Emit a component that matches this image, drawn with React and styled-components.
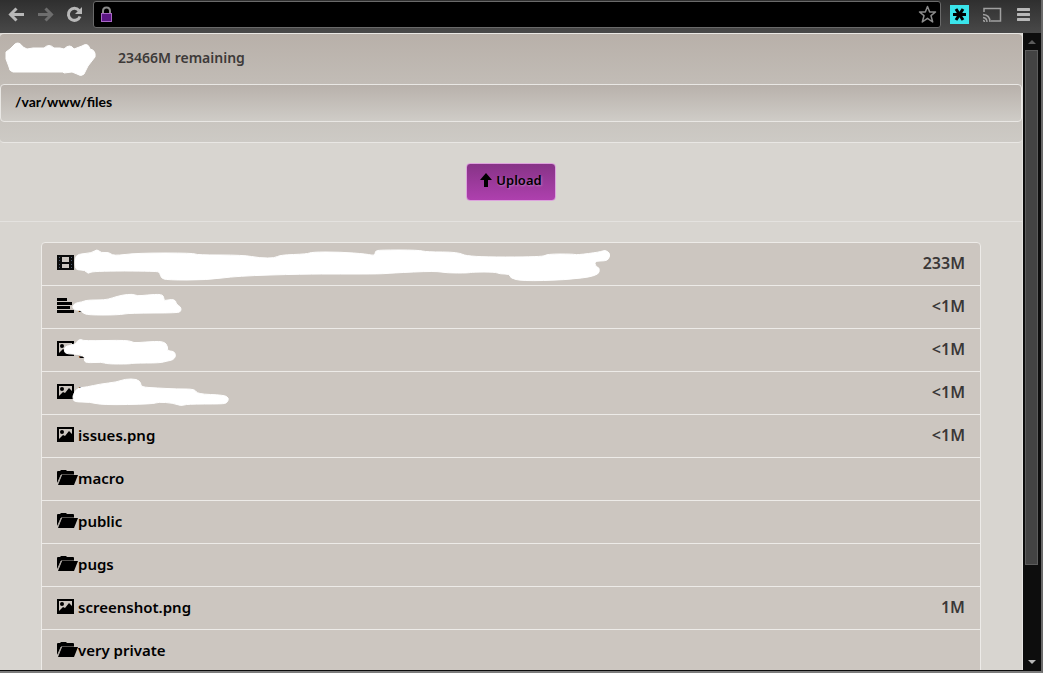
import React from "react";
import styled, { createGlobalStyle } from "styled-components";

const Global = createGlobalStyle`
  * { box-sizing: border-box; }
  body { margin: 0; background: #d8d5d0; font-family: Lato, "Open Sans", sans-serif; }
  button, input { font: inherit; }
`;

const Window = styled.div`
  display: flex;
  flex-direction: column;
  height: 100vh;
  overflow: hidden;
  border-right: 2px solid #6b6b6b;
  border-bottom: 2px solid #7b7b7b;
`;

const Toolbar = styled.header`
  display: flex;
  align-items: center;
  gap: 8px;
  flex: none;
  height: 33px;
  padding: 0 7px 4px 6px;
  background: linear-gradient(#2f2f2f, #494949);
`;

const ToolButton = styled.button`
  display: flex;
  align-items: center;
  justify-content: center;
  flex: none;
  width: 21px;
  height: 21px;
  padding: 0;
  border: 0;
  background: none;
  color: ${(p) => (p.$dim ? "#6e6e6e" : "#b8b8b8")};
`;

const ToolGroup = styled.div`
  display: flex;
  gap: ${(p) => p.$gap}px;
`;

const AddressBar = styled.label`
  display: flex;
  align-items: center;
  flex: 1;
  min-width: 0;
  height: 27px;
  padding: 0 2px 0 6px;
  border: 1px solid #6a6a6a;
  border-radius: 3px;
  background: #000;
`;

const AddressInput = styled.input`
  flex: 1;
  min-width: 0;
  height: 20px;
  border: 0;
  outline: 0;
  background: transparent;
  color: #ccc;
  font-size: 14px;
`;

const Viewport = styled.div`
  display: flex;
  flex: 1;
  min-height: 0;
  border-bottom: 1px solid #0c0c0c;
`;

const Page = styled.main`
  flex: 1;
  min-width: 0;
  overflow: hidden;
  background: #d8d5d0;
  border-right: 1px solid #e6e4e1;
`;

const Banner = styled.div`
  padding-bottom: 20px;
  border: solid #e9e7e4;
  border-width: 1px 0;
  border-radius: 4px;
  background: linear-gradient(#b8b0a9, #cdcac5);
`;

const BannerTop = styled.div`
  display: flex;
  align-items: center;
  gap: 22px;
  height: 50px;
  padding-left: 5px;
`;

const Remaining = styled.span`
  padding-bottom: 2px;
  color: #3d3a39;
  font-family: "Noto Sans", sans-serif;
  font-size: 14px;
  font-weight: 600;
  line-height: 20px;
`;

const PathBar = styled.nav`
  display: flex;
  padding: 7px 14px 9px;
  border: 1px solid #e9e7e4;
  border-radius: 4px;
  background: linear-gradient(#b8b1ab, #cfccc7);
`;

const TextLink = styled.a`
  color: #000;
  font-size: 14px;
  font-weight: 700;
  line-height: 20px;
  text-decoration: none;
`;

const UploadArea = styled.section`
  display: flex;
  justify-content: center;
  padding: 20px 0;
  border-bottom: 1px solid #e4e2df;
`;

const UploadButton = styled.button`
  display: flex;
  align-items: center;
  gap: 4px;
  height: 38px;
  padding: 0 13px 4px;
  border: 1px solid #dda2dd;
  border-radius: 4px;
  background: linear-gradient(#873387, #ae40ae);
  color: #000;
  font-family: "Noto Sans", sans-serif;
  font-size: 13px;
  font-weight: 600;
  text-shadow: 1px 1px 2px rgba(255, 255, 255, 0.3);
`;

const FileList = styled.ul`
  margin: 20px 41px;
  padding: 0;
  border: 1px solid #edebe8;
  border-radius: 4px;
  background: #ccc6c0;
  list-style: none;
`;

const FileRow = styled.li`
  position: relative;
  display: flex;
  align-items: center;
  justify-content: space-between;
  height: 43px;
  padding: 0 15px 2px;
  border-bottom: 1px solid #edebe8;
  font-family: "Noto Sans", sans-serif;
  font-size: 15px;
  font-weight: 600;
  line-height: 20px;
`;

const FileLink = styled.a`
  display: flex;
  align-items: center;
  color: #000;
  text-decoration: none;
`;

const IconSlot = styled.span`
  display: flex;
  flex: none;
  width: 21px;
  height: 17px;
`;

const FileSize = styled.span`
  color: #3a3737;
  font-size: 16px;
`;

const ScribbleLayer = styled.svg`
  position: absolute;
  left: 0;
  top: 0;
  pointer-events: none;
`;

const ScrollTrack = styled.aside`
  display: flex;
  flex-direction: column;
  flex: none;
  width: 18px;
  padding: 0 3px 0 2px;
  background: #0d0d0d;
`;

const ScrollArrow = styled.button`
  display: flex;
  align-items: center;
  justify-content: center;
  flex: none;
  height: 17px;
  padding: 0;
  border: 0;
  background: none;
  color: ${(p) => (p.$dim ? "#5c5c5c" : "#b8b8b8")};
`;

const ScrollThumb = styled.div`
  flex: 515;
  border: 1px solid #5c5c5c;
  background: #434343;
`;

const ScrollRest = styled.div`
  flex: 88;
`;

// Turns a list of outline points into a closed curve through their midpoints.
function smoothOutline(points) {
  const pts = points.split(" ").map((p) => p.split(",").map(Number));
  const mid = (a, b) => `${(a[0] + b[0]) / 2} ${(a[1] + b[1]) / 2}`;
  const last = pts[pts.length - 1];
  return (
    `M${mid(last, pts[0])}` +
    pts.map((p, i) => `Q${p[0]} ${p[1]} ${mid(p, pts[(i + 1) % pts.length])}`).join("") +
    "Z"
  );
}

function Scribble({ points, viewBox }) {
  return (
    <ScribbleLayer width="600" height="42" viewBox={viewBox}>
      <path d={smoothOutline(points)} fill="#fff" stroke="#fff" strokeWidth="1" />
    </ScribbleLayer>
  );
}

const icons = {
  film: (
    <svg width="17" height="15" shapeRendering="crispEdges">
      <path d="M0 0H17V15H0Z" fill="#0b0b0b" />
      <path d="M5 2H12V7H5ZM5 9H12V13H5Z" fill="#ccc6c0" />
      <path d="M2 2h1v1H2zM2 5h1v1H2zM2 9h1v1H2zM2 12h1v1H2zM14 2h1v1h-1zM14 5h1v1h-1zM14 9h1v1h-1zM14 12h1v1h-1z" fill="#4c5a70" />
    </svg>
  ),
  text: (
    <svg width="17" height="15" shapeRendering="crispEdges">
      <path d="M0 0H10V3H0ZM0 4H15V7H0ZM0 8H13V11H0ZM0 12H17V15H0Z" />
    </svg>
  ),
  image: (
    <svg width="17" height="15">
      <path d="M0 0H17V15H0Z" />
      <path d="M2 2H15V7L12 4L8 9L6 8L2 12Z" fill="#ccc6c0" />
      <circle cx="5" cy="5" r="2" />
    </svg>
  ),
  folder: (
    <svg width="21" height="15">
      <path d="M0 13V2Q0 1 1 1H3L4 0H9L10 1H16Q17 1 17 2V4H5L4 5Z" />
      <path d="M5 4.500H17" stroke="#55524f" />
      <path d="M5 5H21L17 15H1Z" />
      <path d="M1 13L4 5" stroke="#a49f9a" />
    </svg>
  ),
};

const files = [
  {
    icon: "film", name: "", size: "233M", box: "42 243 600 42",
    mark: "75,258 78,254 92,253 97,249 101,253 109,252 113,256 137,253 193,253 197,255 243,255 260,258 275,258 280,255 307,254 312,252 340,252 367,254 375,256 375,251 380,250 418,250 427,252 458,252 468,257 543,257 547,254 573,254 577,255 600,252 605,250 610,253 609,259 605,261 595,261 595,266 600,268 598,276 565,280 522,281 510,278 510,274 500,274 495,272 473,272 468,273 447,273 435,271 392,273 380,274 340,274 303,274 237,276 207,280 167,280 161,278 160,273 157,271 92,271 88,274 85,270 77,270 75,267",
  },
  {
    icon: "text", name: "s", size: "<1M", box: "42 286 600 42",
    mark: "72,307 75,303 82,302 87,300 105,300 112,298 122,295 133,294 137,296 147,295 162,294 164,298 164,301 172,299 176,301 176,304 181,307 181,311 178,313 130,313 118,315 88,315 83,313 80,310 75,310",
  },
  {
    icon: "image", name: "g", size: "<1M", box: "42 329 600 42",
    mark: "64,349 66,346 76,344 77,341 81,339 83,341 129,340 133,343 145,342 164,341 168,347 167,351 174,351 176,356 173,360 167,361 160,363 133,363 130,364 107,364 102,362 86,363 84,360 85,357 79,354 65,354",
  },
  {
    icon: "image", name: "i", size: "<1M", box: "42 372 600 42",
    mark: "73,398 73,395 77,388 87,387 100,384 117,382 125,379 137,379 141,383 141,387 157,388 177,389 195,389 197,394 224,395 229,398 227,403 222,404 187,404 181,406 173,403 158,402 153,404 102,405 90,402 74,402",
  },
  { icon: "image", name: "issues.png", size: "<1M" },
  { icon: "folder", name: "macro" },
  { icon: "folder", name: "public" },
  { icon: "folder", name: "pugs" },
  { icon: "image", name: "screenshot.png", size: "1M" },
  { icon: "folder", name: "very private" },
];

export default function App() {
  return (
    <>
      <Global />
      <Window>
        <Toolbar>
          <ToolGroup $gap={8}>
            <ToolButton aria-label="Back">
              <svg width="17" height="15" fill="none" stroke="currentColor" strokeWidth="3"><path d="M16 7.5H3M8.500 1.500L2.500 7.500L8.500 13.500" /></svg>
            </ToolButton>
            <ToolButton aria-label="Forward" $dim>
              <svg width="17" height="15" fill="none" stroke="currentColor" strokeWidth="3"><path d="M1 7.5H14M8.500 1.500L14.500 7.500L8.500 13.500" /></svg>
            </ToolButton>
            <ToolButton aria-label="Reload">
              <svg width="17" height="17" fill="none" stroke="currentColor" strokeWidth="3"><path d="M13 4.500A6 6 0 1 0 14 10.500" /><path d="M16 1V8H9Z" fill="currentColor" stroke="none" /></svg>
            </ToolButton>
          </ToolGroup>
          <AddressBar>
            <svg width="13" height="17">
              <path d="M3 8V5Q3 1.500 6.500 1.500T10 5V8" fill="none" stroke="#8a8a8a" strokeWidth="2" />
              <rect x="1.500" y="7.500" width="10" height="8" fill="#5b1683" stroke="#a866c4" />
            </svg>
            <AddressInput aria-label="Address" />
            <ToolButton as="span">
              <svg width="19" height="19" fill="none" stroke="#8b8b8b" strokeWidth="1.500" strokeLinejoin="round"><path d="M9.500 1.500L11.700 7H17.500L13 10.700L14.700 17L9.500 13.300L4.300 17L6 10.700L1.500 7H7.300Z" /></svg>
            </ToolButton>
          </AddressBar>
          <ToolGroup $gap={11}>
            <ToolButton aria-label="Extension">
              <svg width="19" height="19"><path d="M0 0H19V19H0Z" fill="#3ae4ea" /><path d="M3 9.500H16M6 4L13 15M13 4L6 15" stroke="#000" strokeWidth="3" /></svg>
            </ToolButton>
            <ToolButton aria-label="Cast">
              <svg width="20" height="16" fill="none" stroke="#a0a0a0" strokeWidth="1.500"><path d="M2 5V1.500H18.500V14H9" /><path d="M1 7.500Q8 8 8 15M1 10.500Q5 11 5 15M1 13.500Q2.500 13.500 2.500 15" /></svg>
            </ToolButton>
            <ToolButton aria-label="Menu">
              <svg width="13" height="13"><path d="M1 1.500H12M1 6.500H12M1 11.500H12" stroke="#b8b8b8" strokeWidth="3" strokeLinecap="round" /></svg>
            </ToolButton>
          </ToolGroup>
        </Toolbar>
        <Viewport>
          <Page>
            <Banner>
              <BannerTop>
                <svg width="91" height="34" viewBox="5 43 91 34" fill="#fff" stroke="#fff" strokeWidth="1" strokeLinejoin="round">
                  <path d="M6 53L10 50L15 45Q19 42 23 48L27 50L33 49L44 49Q49 44 54 49L60 49L64 50Q70 44 74 50L82 47Q88 43 90 50Q96 51 95 58L88 67L84 75Q81 78 77 75L72 73L64 74L63 73H13Q9 72 9 68L6 60Z" />
                </svg>
                <Remaining>23466M remaining</Remaining>
              </BannerTop>
              <PathBar><TextLink href="#files">/var/www/files</TextLink></PathBar>
            </Banner>
            <UploadArea>
              <UploadButton>
                <svg width="12" height="15"><path d="M6 0L12 7H8V14H4V7H0Z" /></svg>
                Upload
              </UploadButton>
            </UploadArea>
            <FileList>
              {files.map((f, i) => (
                <FileRow key={i}>
                  <FileLink href="#file" aria-label={f.name.length > 1 ? f.name : "Hidden file"}>
                    <IconSlot>{icons[f.icon]}</IconSlot>
                    {f.name}
                  </FileLink>
                  <FileSize>{f.size}</FileSize>
                  {f.mark && <Scribble points={f.mark} viewBox={f.box} />}
                </FileRow>
              ))}
            </FileList>
          </Page>
          <ScrollTrack>
            <ScrollArrow aria-label="Scroll up" $dim><svg width="8" height="4" fill="currentColor"><path d="M0 4L4 0L8 4Z" /></svg></ScrollArrow>
            <ScrollThumb />
            <ScrollRest />
            <ScrollArrow aria-label="Scroll down"><svg width="8" height="4" fill="currentColor"><path d="M0 0L4 4L8 0Z" /></svg></ScrollArrow>
          </ScrollTrack>
        </Viewport>
      </Window>
    </>
  );
}
